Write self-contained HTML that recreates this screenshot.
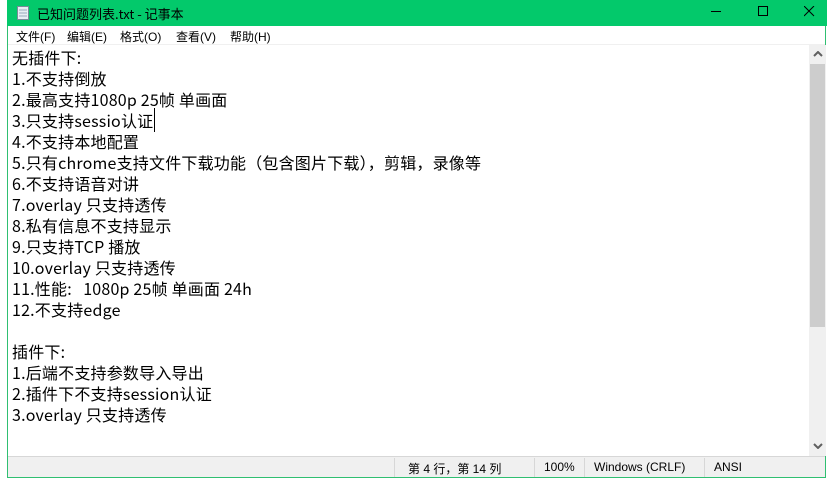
<!DOCTYPE html>
<html><head><meta charset="utf-8"><style>
*{margin:0;padding:0;box-sizing:border-box}
body{width:834px;height:478px;background:#fff;position:relative;overflow:hidden;font-family:"Liberation Sans","Noto Sans CJK SC",sans-serif}
#win{position:absolute;left:7px;top:0;width:819px;height:478px;border:1px solid #2fbf71;border-top:none;background:#fff}
#title{position:absolute;left:-1px;top:0;width:820px;height:26px;background:#03c96b;color:#000;font-size:13px;font-family:"Noto Sans CJK SC",sans-serif}
#title .t{position:absolute;left:30px;top:4px}
#menu{position:absolute;left:0;top:26px;width:817px;height:19px;background:#fff;font-size:12px;font-family:"Liberation Sans","Noto Sans CJK SC",sans-serif;border-bottom:1px solid #f0f0f0}
#menu span{position:absolute;top:2px}
#text{position:absolute;left:4px;top:47px;font-size:16px;line-height:21px;letter-spacing:0.2px;font-family:"Noto Sans CJK SC",sans-serif;white-space:pre;color:#000}
#sb{position:absolute;left:801px;top:45px;width:17px;height:411px;background:#f0f0f0}
#thumb{position:absolute;left:802px;top:64px;width:15px;height:263px;background:#cdcdcd}
#status{position:absolute;left:0;top:456px;width:817px;height:21px;background:#f0f0f0;border-top:1px solid #d7d7d7;font-size:12px;font-family:"Liberation Sans","Noto Sans CJK SC",sans-serif}
#status span{position:absolute;top:3px}
.sep{position:absolute;top:1px;width:1px;height:19px;background:#d7d7d7}
</style></head><body>
<div id="win">
<div id="title">
<svg style="position:absolute;left:9px;top:5px" width="14" height="16"><rect x="1.5" y="1.5" width="11" height="13" fill="#e8eef4" stroke="#7a8a99"/><line x1="3" y1="5" x2="11" y2="5" stroke="#9ab"/><line x1="3" y1="8" x2="11" y2="8" stroke="#9ab"/><line x1="3" y1="11" x2="11" y2="11" stroke="#9ab"/></svg>
<span class="t">已知问题列表.txt - 记事本</span>
<svg style="position:absolute;left:704px;top:6px" width="12" height="12"><line x1="0" y1="5.5" x2="10" y2="5.5" stroke="#000"/></svg>
<svg style="position:absolute;left:751px;top:6px" width="12" height="12"><rect x="0.5" y="0.5" width="9" height="9" fill="none" stroke="#000"/></svg>
<svg style="position:absolute;left:797px;top:6px" width="12" height="12"><path d="M0 0L10 10M10 0L0 10" stroke="#000"/></svg>
</div>
<div id="menu"><span style="left:8px">文件(F)</span><span style="left:59px">编辑(E)</span><span style="left:112px">格式(O)</span><span style="left:168px">查看(V)</span><span style="left:222px">帮助(H)</span></div>
<div id="text">无插件下:
1.不支持倒放
2.最高支持1080p 25帧 单画面
3.只支持sessio认证<span style="border-left:1px solid #000;margin-left:1px"></span>
4.不支持本地配置
5.只有chrome支持文件下载功能（包含图片下载），剪辑，录像等
6.不支持语音对讲
7.overlay 只支持透传
8.私有信息不支持显示
9.只支持TCP 播放
10.overlay 只支持透传
11.性能:   1080p 25帧 单画面 24h
12.不支持edge

插件下:
1.后端不支持参数导入导出
2.插件下不支持session认证
3.overlay 只支持透传</div>
<div id="sb"></div><div id="thumb"></div>
<svg style="position:absolute;left:805px;top:51px" width="10" height="6"><path d="M1 5L5 1L9 5" stroke="#606060" stroke-width="2" fill="none"/></svg>
<svg style="position:absolute;left:805px;top:443px" width="10" height="6"><path d="M1 1L5 5L9 1" stroke="#606060" stroke-width="2" fill="none"/></svg>
<div id="status">
<div class="sep" style="left:386px"></div><span style="left:400px">第 4 行，第 14 列</span>
<div class="sep" style="left:526px"></div><span style="left:536px">100%</span>
<div class="sep" style="left:576px"></div><span style="left:586px">Windows (CRLF)</span>
<div class="sep" style="left:696px"></div><span style="left:706px">ANSI</span>
</div>
</div>
</body></html>
